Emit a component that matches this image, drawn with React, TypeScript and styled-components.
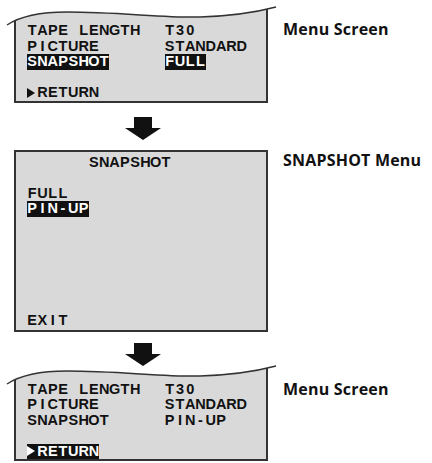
import styled, { createGlobalStyle } from 'styled-components';

const GlobalStyle = createGlobalStyle`
  html, body {
    margin: 0;
    padding: 0;
    background: #fff;
    overflow: hidden;
  }
`;

const Page = styled.div`
  display: flex;
  flex-direction: column;
  padding: 7px 0 0 14px;
  color: #111;
`;

const Section = styled.div`
  display: flex;
  align-items: flex-start;
  gap: 15px;
`;

const Label = styled.div<{ $top: number }>`
  margin-top: ${p => p.$top}px;
  font-family: 'Open Sans', Lato, sans-serif;
  font-weight: 700;
  font-size: 16px;
  line-height: 19px;
  letter-spacing: 0.2px;
  white-space: nowrap;
`;

const WaveScreen = styled.div`
  width: 254px;
  flex: none;
`;

const WaveTop = styled.svg`
  display: block;
  margin-left: -7px;
  overflow: visible;
`;

const ScreenBody = styled.div<{ $wave?: boolean; $height?: number }>`
  box-sizing: border-box;
  width: 254px;
  flex: none;
  display: flex;
  flex-direction: column;
  background: #d9d9d9;
  border: 2px solid #333;
  border-top: ${p => (p.$wave ? 'none' : '2px solid #333')};
  height: ${p => (p.$height ? `${p.$height}px` : 'auto')};
  padding: ${p => (p.$wave ? '0 0 0 11px' : '3px 0 1px 11px')};
  font-family: 'Liberation Sans', Arial, sans-serif;
  font-weight: 700;
  font-size: 14.5px;
`;

const Row = styled.div`
  display: grid;
  grid-template-columns: 137.5px auto;
  height: 15.5px;
  line-height: 15.5px;
`;

const Line = styled.div<{ $indent?: number; $bottom?: boolean }>`
  display: flex;
  height: 15.5px;
  line-height: 15.5px;
  padding-left: ${p => (p.$indent ?? 0) * 10.3}px;
  margin-top: ${p => (p.$bottom ? 'auto' : '0')};
`;

const Mark = styled.span<{ $on?: boolean }>`
  display: inline-flex;
  justify-self: start;
  height: 15.5px;
  background: ${p => (p.$on ? '#111' : 'transparent')};
  color: ${p => (p.$on ? '#fff' : 'inherit')};
`;

const Cell = styled.span`
  display: inline-flex;
  align-items: center;
  justify-content: center;
  width: 10.3px;
  height: 15.5px;
`;

const Tri = styled.span`
  width: 0;
  height: 0;
  margin-left: -2px;
  border-left: 8px solid currentColor;
  border-top: 5px solid transparent;
  border-bottom: 5px solid transparent;
`;

const ArrowDown = styled.svg<{ $mt: number; $mb: number }>`
  display: block;
  margin: ${p => p.$mt}px 0 ${p => p.$mb}px 110px;
`;

function Osd({ text }: { text: string }) {
  return (
    <>
      {[...text].map((c, i) => (
        <Cell key={i}>{c === ' ' ? '\u00a0' : c}</Cell>
      ))}
    </>
  );
}

function Return({ on }: { on?: boolean }) {
  return (
    <Row>
      <Mark $on={on}>
        <Cell>
          <Tri />
        </Cell>
        <Osd text="RETURN" />
      </Mark>
    </Row>
  );
}

const CURVE = 'M0 18 C 12 10, 30 5, 60 5 C 110 5, 160 11, 193 10 C 225 9, 250 5, 269 0';

function Wave({ id }: { id: string }) {
  return (
    <WaveTop width="270" height="16" viewBox="0 0 270 16">
      <defs>
        <clipPath id={id}>
          <path d={`${CURVE} L269 16 L0 16 Z`} />
        </clipPath>
      </defs>
      <g clipPath={`url(#${id})`}>
        <rect x="8" y="0" width="252" height="16" fill="#d9d9d9" />
        <line x1="8" y1="-2" x2="8" y2="16" stroke="#333" strokeWidth="2" />
        <line x1="260" y1="-2" x2="260" y2="16" stroke="#333" strokeWidth="2" />
      </g>
      <path d={CURVE} fill="none" stroke="#333" strokeWidth="1.5" />
    </WaveTop>
  );
}

function Arrow({ mt, mb }: { mt: number; mb: number }) {
  return (
    <ArrowDown $mt={mt} $mb={mb} width="38" height="23" viewBox="0 0 38 23">
      <path d="M10 0 H28 V11 H37 L19 23 L1 11 H10 Z" fill="#111" />
    </ArrowDown>
  );
}

function MenuScreen({ id, value, onSnapshot, onReturn }: { id: string; value: string; onSnapshot?: boolean; onReturn?: boolean }) {
  return (
    <WaveScreen>
      <Wave id={id} />
      <ScreenBody $wave>
        <Row>
          <Mark><Osd text="TAPE LENGTH" /></Mark>
          <Mark><Osd text="T30" /></Mark>
        </Row>
        <Row>
          <Mark><Osd text="PICTURE" /></Mark>
          <Mark><Osd text="STANDARD" /></Mark>
        </Row>
        <Row>
          <Mark $on={onSnapshot}><Osd text="SNAPSHOT" /></Mark>
          <Mark $on={onSnapshot}><Osd text={value} /></Mark>
        </Row>
        <Row />
        <Return on={onReturn} />
      </ScreenBody>
    </WaveScreen>
  );
}

export default function App() {
  return (
    <>
      <GlobalStyle />
      <Page>
        <Section>
          <MenuScreen id="wave-a" value="FULL" onSnapshot />
          <Label $top={13}>Menu Screen</Label>
        </Section>

        <Arrow mt={14} mb={10} />

        <Section>
          <ScreenBody $height={182}>
            <Line $indent={6}><Osd text="SNAPSHOT" /></Line>
            <Line />
            <Line><Mark><Osd text="FULL" /></Mark></Line>
            <Line><Mark $on><Osd text="PIN-UP" /></Mark></Line>
            <Line $bottom><Osd text="EXIT" /></Line>
          </ScreenBody>
          <Label $top={1}>SNAPSHOT Menu</Label>
        </Section>

        <Arrow mt={11} mb={0} />

        <Section>
          <MenuScreen id="wave-b" value="PIN-UP" onReturn />
          <Label $top={14}>Menu Screen</Label>
        </Section>
      </Page>
    </>
  );
}
